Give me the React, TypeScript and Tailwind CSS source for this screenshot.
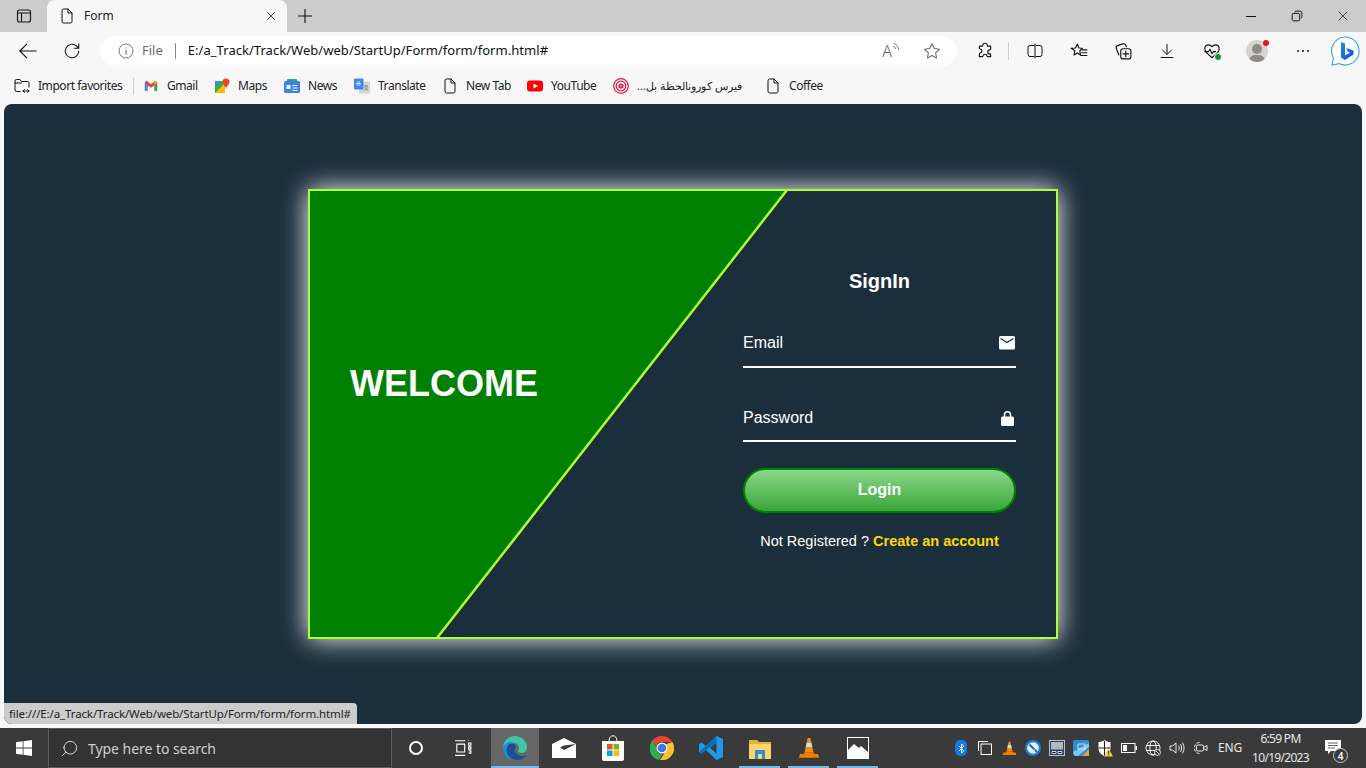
import type { ReactNode } from "react";
import { Bluetooth, Search, X } from "lucide-react";

const ui = "font-['Noto_Sans','Liberation_Sans',sans-serif]";

function Svg({ size = 16, children, className = "" }: { size?: number; children: ReactNode; className?: string }) {
  return (
    <svg width={size} height={size} viewBox="0 0 16 16" fill="none" className={`shrink-0 ${className}`}>
      {children}
    </svg>
  );
}

const line = { stroke: "currentColor", strokeWidth: 1, strokeLinecap: "round" as const, strokeLinejoin: "round" as const };

function PageIcon() {
  return (
    <Svg size={16}>
      <path d="M3 2.500a1.500 1.500 0 0 1 1.500-1.500H9l4 4v8.500a1.500 1.500 0 0 1-1.500 1.500h-7A1.500 1.500 0 0 1 3 13.500z M9 1v4h4" {...line} stroke="#111" />
    </Svg>
  );
}

function Bookmark({ icon, label, className, rtl = false }: { icon: ReactNode; label: string; className: string; rtl?: boolean }) {
  return (
    <div className={`flex items-center shrink-0 ${className}`}>
      {icon}
      {rtl ? (
        <span dir="rtl" className="ml-2 text-[11px] text-[#222] whitespace-nowrap">{label}</span>
      ) : (
        <span className="ml-2 text-[12px] tracking-[-0.45px] text-[#222] whitespace-nowrap">{label}</span>
      )}
    </div>
  );
}

function ToolButton({ children }: { children: ReactNode }) {
  return <div className="relative w-[44px] h-[30px] flex items-center justify-center shrink-0 text-[#111]">{children}</div>;
}

function TaskApp({ children, state = "" }: { children: ReactNode; state?: "" | "active" | "open" }) {
  return (
    <div className={`relative h-[40px] flex items-center justify-center shrink-0 ${state === "active" ? "w-[48px] bg-[#666666]" : "w-[49px]"}`}>
      {children}
      {state !== "" && <div className={`absolute bottom-0 h-[2px] bg-[#76b9ed] ${state === "active" ? "inset-x-0" : "inset-x-[4px]"}`} />}
    </div>
  );
}

function Tray({ children }: { children: ReactNode }) {
  return <div className="w-[24px] h-[40px] flex items-center justify-center shrink-0 text-white">{children}</div>;
}

function VlcIcon({ size = 24 }: { size?: number }) {
  return (
    <svg width={size} height={size} viewBox="0 0 24 24" className="shrink-0">
      <path d="M10.500 1h3l1 5h-5z" fill="#f58a0b" />
      <path d="M9.400 6h5.200l1 5H8.400z" fill="#d9d9d9" />
      <path d="M8.400 11h7.200l1.200 5.500H7.200z" fill="#f58a0b" />
      <path d="M7.200 16.500h9.600l1 2H22l1 4H1l1-4h4.200z" fill="#f07d00" />
    </svg>
  );
}

function BrowserChrome() {
  return (
    <>
      {/* tab strip */}
      <div className="h-[32px] bg-[#cccccc] flex items-stretch shrink-0">
        <div className="w-[47px] flex items-center justify-center">
          <Svg size={16}>
            <rect x="1.500" y="2" width="13" height="12" rx="2" stroke="#111" strokeWidth="1.100" />
            <path d="M2 5h12M5.500 5v8.500" stroke="#111" strokeWidth="1.100" />
          </Svg>
        </div>
        <div className="w-[240px] bg-[#f7f7f7] rounded-t-[8px] flex items-center pl-[12px] pr-[9px]">
          <PageIcon />
          <span className="ml-[9px] text-[12px] text-[#222] flex-1">Form</span>
          <X size={14} strokeWidth={1.4} className="text-[#111]" />
        </div>
        <div className="w-[36px] flex items-center justify-center">
          <Svg size={16}>
            <path d="M8 1v14M1 8h14" stroke="#111" strokeWidth="1.100" />
          </Svg>
        </div>
        <div className="flex-1" />
        <div className="w-[46px] flex items-center justify-center">
          <div className="w-[10px] h-px bg-[#111]" />
        </div>
        <div className="w-[46px] flex items-center justify-center">
          <Svg size={12}>
            <rect x="1.500" y="4.500" width="10" height="10" rx="2" stroke="#111" strokeWidth="1.300" />
            <path d="M5 3.500c0-1 .8-2 2-2h5c1.500 0 2.500 1 2.500 2.500v5c0 1-.7 2-1.500 2" stroke="#111" strokeWidth="1.300" />
          </Svg>
        </div>
        <div className="w-[46px] flex items-center justify-center">
          <X size={16} strokeWidth={1.1} className="text-[#111]" />
        </div>
      </div>

      {/* address row */}
      <div className="h-[38px] bg-[#f7f7f7] flex items-center shrink-0">
        <div className="w-[100px] flex items-center shrink-0">
          <div className="w-[56px] flex justify-center">
            <Svg size={20}>
              <path d="M14.500 8H1.500M7 2.500 1.500 8 7 13.500" {...line} stroke="#111" strokeWidth={0.9} />
            </Svg>
          </div>
          <div className="w-[32px] flex justify-center">
            <Svg size={18}>
              <path d="M14 8a6 6 0 1 1-1.800-4.300L14 5.500M14 1.500v4h-4" {...line} stroke="#111" strokeWidth={0.95} />
            </Svg>
          </div>
        </div>
        <div className="w-[857px] h-[30px] bg-white rounded-full flex items-center pl-[18px] pr-[16px] shrink-0">
          <Svg size={16}>
            <circle cx="8" cy="8" r="7" stroke="#777" strokeWidth="1" />
            <path d="M8 7v4.500M8 4.500v1" stroke="#777" strokeWidth="1.200" />
          </Svg>
          <span className="ml-[8px] text-[13px] text-[#6b6b6b]">File</span>
          <div className="ml-[12px] w-px h-[16px] bg-[#888]" />
          <span className="ml-[12px] text-[13px] tracking-[0.04px] text-[#111] whitespace-nowrap">E:/a_Track/Track/Web/web/StartUp/Form/form/form.html#</span>
          <div className="flex-1" />
          <div className="flex items-center gap-[23px]">
            <div className="flex items-start">
              <span className="text-[16px] leading-[20px] font-light text-[#666]">A</span>
              <Svg size={8} className="mt-[2px]">
                <path d="M2 6c3 .5 4.500 3 4.500 6M3 1c6 1 10 6 10 12" stroke="#666" strokeWidth="1.800" />
              </Svg>
            </div>
            <Svg size={18}>
              <path d="M8 1.500l2 4.300 4.700.6-3.500 3.200.9 4.700L8 12l-4.100 2.300.9-4.700L1.300 6.400 6 5.800z" stroke="#666" strokeWidth="0.900" strokeLinejoin="round" />
            </Svg>
          </div>
        </div>
        <div className="flex items-center ml-[6px]">
          <ToolButton>
            <Svg size={18}>
              <path d="M6 2.800c0-2.300 4-2.300 4 0 0 .5.400.9.900.9h2.100v2.500c0 .4-.4.8-.8.8-2.300 0-2.300 3.600 0 3.600.4 0 .8.400.8.8V13H10.500c-.5 0-.8-.4-.8-.8 0-1.800-3.400-1.800-3.400 0 0 .4-.4.800-.8.800H3v-2.300c0-.5.400-.9.800-.9 1.900 0 1.900-3.600 0-3.600-.4 0-.8-.4-.8-.9V3.700h2.100c.5 0 .9-.4.900-.9z" {...line} stroke="#111" />
            </Svg>
          </ToolButton>
          <div className="w-px h-[18px] bg-[#cfcfcf] ml-[1px] -mr-[2px]" />
          <div className="w-[6px]" />
          <ToolButton>
            <Svg size={16}>
              <path d="M7 2.500H3a2 2 0 0 0-2 2v7a2 2 0 0 0 2 2h4M9 2.500h4a2 2 0 0 1 2 2v7a2 2 0 0 1-2 2H9M8 1v14" {...line} stroke="#111" />
            </Svg>
          </ToolButton>
          <ToolButton>
            <Svg size={18}>
              <path d="M6.500 1.800 8 5.300l3 .3-2.300 2.200.7 3.700-2.900-1.800-2.900 1.800.7-3.700L1 5.600l3.900-.3zM11 7h4M10.500 9.500H15M9.800 12H15" {...line} stroke="#111" />
            </Svg>
          </ToolButton>
          <ToolButton>
            <Svg size={18}>
              <rect x="6" y="6" width="9" height="9" rx="2" {...line} stroke="#111" />
              <path d="M10.500 8v5M8 10.500h5M4.300 11.500 2 5.500C1.700 4.500 2 3.500 3 3.200l5-1.500c1-.3 2 .2 2.400 1.200l.6 1.300" {...line} stroke="#111" />
            </Svg>
          </ToolButton>
          <ToolButton>
            <Svg size={16}>
              <path d="M8 1.500v9.500M3.500 7l4.500 4.500L12.500 7M2 14.500h12" {...line} stroke="#111" />
            </Svg>
          </ToolButton>
          <div className="w-px" />
          <ToolButton>
            <div className="relative">
              <Svg size={18}>
                <path d="M3 9.500C.5 6.500 1.500 2.500 4.800 2.500c1.400 0 2.400.7 3.200 1.700.8-1 1.800-1.700 3.200-1.700 3.300 0 4.300 4 1.800 7L8 14z" {...line} stroke="#111" />
                <path d="M1.500 8.500h3.500l1.300-2 1.700 4 1.200-2h2" {...line} stroke="#111" />
              </Svg>
              <div className="absolute right-[-1px] bottom-[-1px] w-[8px] h-[8px] rounded-full bg-[#1b8a2a] border border-white" />
            </div>
          </ToolButton>
          <div className="w-px" />
          <ToolButton>
            <div className="relative w-[22px] h-[22px] rounded-full bg-[#d6d4d0] overflow-hidden">
              <div className="absolute left-[6px] top-[4px] w-[10px] h-[10px] rounded-full bg-[#8f8b87]" />
              <div className="absolute left-[3px] top-[15px] w-[16px] h-[12px] rounded-full bg-[#8f8b87]" />
            </div>
            <div className="absolute right-[10px] top-[4px] w-[6px] h-[6px] rounded-full bg-[#e81123]" />
          </ToolButton>
          <div className="w-[2px]" />
          <ToolButton>
            <div className="flex gap-[3px]">
              <div className="w-[2px] h-[2px] rounded-full bg-[#111]" />
              <div className="w-[2px] h-[2px] rounded-full bg-[#111]" />
              <div className="w-[2px] h-[2px] rounded-full bg-[#111]" />
            </div>
          </ToolButton>
          <div className="w-[34px] flex justify-center ml-[3px]">
            <svg width="32" height="32" viewBox="0 0 32 32">
              <defs>
                <linearGradient id="bingB" x1="0" y1="0" x2="1" y2="1">
                  <stop offset="0" stopColor="#1a8fe8" />
                  <stop offset="1" stopColor="#1748d8" />
                </linearGradient>
              </defs>
              <path d="M16 2a14 14 0 1 1-6 26.600L3 30l1.500-7A14 14 0 0 1 16 2z" fill="#fff" stroke="#3aa5ee" strokeWidth="1.100" />
              <path d="M12 7l4 1.500v12l5-2.800-2.300-1.100-1.500-3.600 7.300 2.500v4L16 25l-4-2.500z" fill="url(#bingB)" />
            </svg>
          </div>
        </div>
      </div>

      {/* favorites row */}
      <div className="h-[34px] bg-[#f7f7f7] flex items-center shrink-0 pl-[14px] pb-[2px]">
        <Bookmark
          className="w-[119px]"
          label="Import favorites"
          icon={
            <Svg size={16}>
              <path d="M6 13.500H2.500A1.500 1.500 0 0 1 1 12V3a1.500 1.500 0 0 1 1.500-1.500H6l1.500 2h6A1.500 1.500 0 0 1 15 5v4M1 5h6.500M9 13h6M10.500 11.500 9 13l1.500 1.500M13.500 11.500 15 13l-1.500 1.500" {...line} stroke="#111" />
            </Svg>
          }
        />
        <div className="w-px h-[17px] bg-[#cfcfcf] shrink-0" />
        <div className="w-[10px] shrink-0" />
        <Bookmark
          className="w-[71px]"
          label="Gmail"
          icon={
            <Svg size={14} className="mr-[1px]">
              <path d="M1 3.500v10h3V7l4 3 4-3v6.500h3v-10L13 2 8 6 3 2z" fill="#ea4335" />
              <path d="M1 3.500v10h3V7z" fill="#4285f4" />
              <path d="M12 7v6.500h3v-10z" fill="#34a853" />
              <path d="M15 3.500 13 2l-1 .8V7z" fill="#fbbc04" />
            </Svg>
          }
        />
        <Bookmark
          className="w-[69px]"
          label="Maps"
          icon={
            <Svg size={16} className="-ml-[1px]">
              <path d="M1 3h10v12H1z" fill="#34a853" />
              <path d="M1 15 11 5v10z" fill="#fbbc04" />
              <path d="M1 3h5L1 8z" fill="#4285f4" />
              <path d="M12 0.500a3.500 3.500 0 0 1 3.500 3.500c0 2.200-2.500 4-3.500 6-1-2-3.500-3.800-3.500-6A3.500 3.500 0 0 1 12 .5z" fill="#ea4335" />
            </Svg>
          }
        />
        <Bookmark
          className="w-[70px]"
          label="News"
          icon={
            <Svg size={16}>
              <path d="M2.500 3 3.500 1h9l1 2z" fill="#34a853" />
              <rect x="0" y="3" width="16" height="12" rx="1.500" fill="#3b82f0" />
              <path d="M2.500 7h4v4h-4zM8.500 7h5v1h-5zM8.500 9.500h5v1h-5zM8.500 12h5v1h-5z" fill="#fff" />
            </Svg>
          }
        />
        <Bookmark
          className="w-[88px]"
          label="Translate"
          icon={
            <Svg size={16}>
              <rect x="5" y="3.500" width="11" height="12" rx="1" fill="#d4d4d4" />
              <rect x="0" y="0.500" width="9.500" height="11" rx="1" fill="#4285f4" />
              <path d="M3 5.500h3.500c0 2-3.500 3-3.500.5s2-2.500 3-1.500" stroke="#fff" strokeWidth="0.800" />
              <path d="M10 8h4M12 7v1M11 8.500c.5 2 1.500 3 3 3.500M13.500 8.500c-.5 2-1.500 3-3 3.500" stroke="#6b7280" strokeWidth="0.700" />
            </Svg>
          }
        />
        <Bookmark className="w-[85px]" label="New Tab" icon={<PageIcon />} />
        <Bookmark
          className="w-[86px]"
          label="YouTube"
          icon={
            <Svg size={16}>
              <rect x="0" y="2.500" width="16" height="11" rx="3" fill="#ff0000" />
              <path d="M6.500 5.500v5L11 8z" fill="#fff" />
            </Svg>
          }
        />
        <Bookmark
          className="w-[152px]"
          rtl
          label="فيرس كورونالحظة بل..."
          icon={
            <Svg size={16}>
              <circle cx="8" cy="8" r="7.300" stroke="#e3173e" strokeWidth="1.200" />
              <circle cx="8" cy="8" r="4.800" stroke="#e3173e" strokeWidth="1.200" />
              <circle cx="8" cy="8" r="2.600" fill="#e3173e" />
              <circle cx="8" cy="8" r="1.300" fill="#9b9b9b" />
            </Svg>
          }
        />
        <Bookmark className="" label="Coffee" icon={<PageIcon />} />
      </div>
    </>
  );
}

function LoginCard() {
  return (
    <div className="relative w-[750px] h-[450px] border-2 border-[#adff2f] shadow-[0_0_25px_#ffffff] flex font-['Liberation_Sans',Arial,sans-serif] text-white">
      {/* diagonal panel */}
      <svg className="absolute inset-0" width="746" height="446" viewBox="0 0 746 446">
        <polygon points="0,0 477,0 127,448 0,448" fill="#008000" />
        <line x1="477" y1="-1" x2="127" y2="447" stroke="#adff2f" strokeWidth="2.500" />
      </svg>

      <div className="relative flex-1 flex items-center pl-10 pb-[60px]">
        <h1 className="text-[36px] font-bold leading-none">WELCOME</h1>
      </div>

      <div className="relative w-[273px] mr-10 flex flex-col pt-[77px]">
        <h2 className="text-[20px] leading-[26px] font-bold text-center">SignIn</h2>
        <div className="mt-[34px] h-[40px] border-b-2 border-white flex items-start justify-between pt-[3px]">
          <span className="text-[16px] leading-[24px]">Email</span>
          <svg width="16" height="14" viewBox="0 0 16 14" className="mt-[5px] mr-px">
            <rect width="16" height="13.500" rx="1.500" fill="#ffffff" />
            <path d="M1.500 2.500 8 6.500l6.500-4" fill="none" stroke="#1b2e3c" strokeWidth="1.200" />
          </svg>
        </div>
        <div className="mt-[32px] h-[42px] border-b-2 border-white flex items-start justify-between pt-[6px]">
          <span className="text-[16px] leading-[24px]">Password</span>
          <svg width="13" height="15" viewBox="0 0 13 15" className="mt-[5px] mr-[2px]">
            <path d="M3.500 6V3.800a3 3 0 0 1 6 0V6" fill="none" stroke="#ffffff" strokeWidth="1.500" />
            <rect y="5.500" width="13" height="9.500" rx="1.500" fill="#ffffff" />
          </svg>
        </div>
        <button className="mt-[26px] h-[45px] pb-[2px] rounded-full border-[2.500px] border-[#008000] bg-gradient-to-b from-[#8ad88a] to-[#37a537] text-[16px] font-bold text-white">
          Login
        </button>
        <p className="mt-[18px] text-center text-[14.500px] leading-[20px] whitespace-nowrap">
          Not Registered ? <a href="#" className="font-bold text-[#ffd700]">Create an account</a>
        </p>
      </div>
    </div>
  );
}

function Taskbar() {
  return (
    <div className="h-[40px] bg-[#3a3a3a] flex items-center shrink-0 text-white">
      <div className="w-[48px] flex justify-center">
        <Svg size={16}>
          <path d="M0 2.300 6.700 1.300v6.300H0zM7.500 1.200 16 0v7.600H7.500zM0 8.400h6.700v6.300L0 13.700zM7.500 8.400H16V16l-8.500-1.200z" fill="#fff" />
        </Svg>
      </div>
      <div className="w-[344px] h-[40px] bg-[#333333] border border-[#5c5c5c] flex items-center pl-[11px] text-[#d0d0d0]">
        <Search size={19} strokeWidth={1} className="-scale-x-100 text-white" />
        <span className="ml-[9px] text-[14px] tracking-[-0.05px]">Type here to search</span>
      </div>
      <div className="w-[48px] flex justify-center">
        <div className="w-[14px] h-[14px] rounded-full border-2 border-white" />
      </div>
      <div className="w-[51px] flex justify-center pr-[6px]">
        <Svg size={18}>
          <path d="M1 1.500h9M1 14.500h9M2.500 4.500h7v7h-7zM13 3.500h2v2h-2zM13 7h2v2h-2zM13 1v.5M13 10.500h2v2h-2" stroke="#fff" strokeWidth="1" />
        </Svg>
      </div>
      <TaskApp state="active">
        <svg width="26" height="26" viewBox="0 0 26 26">
          <path d="M13 1a12 12 0 0 1 12 12c0 3-2.500 5-5.500 5-2.300 0-3.500-1-3.500-2 0-1 1-1.500 1-3 0-3-2.500-5-5.500-5C7 8 3 10 1.200 12 1.800 6 6.500 1 13 1z" fill="#3fc7a4" />
          <path d="M1 13c0-3 3.500-6 7.500-6 4 0 6 2.500 6 5 0-3-2-3.500-4-3.500C7 8.500 4.500 11.500 4.500 15c0 4 3.500 9 8.500 10C6.500 25 1 20 1 13z" fill="#1b8fdc" />
          <path d="M10.500 8.500c-3.500 0-6 3-6 6.500 0 5 4.500 10 11 10 4 0 7-2 9-5-2 1-4 1.500-6 1-4-1-6-3-6-6 0-1.500.7-2.500 1.500-3-.5-2-2-3.500-3.500-3.500z" fill="#15508f" />
        </svg>
      </TaskApp>
      <TaskApp>
        <svg width="24" height="20" viewBox="0 0 24 20">
          <path d="M0 6 12 0l12 6-12 1.500-4 2L12 12l12-6v14H0z" fill="#fff" />
        </svg>
      </TaskApp>
      <TaskApp>
        <svg width="24" height="26" viewBox="0 0 24 26">
          <path d="M8 6c0-7 8-7 8 0" fill="none" stroke="#fff" strokeWidth="1" />
          <path d="M1 6h22v18a2 2 0 0 1-2 2H3a2 2 0 0 1-2-2z" fill="#fff" />
          <rect x="6" y="9" width="5.500" height="5.500" fill="#f25022" />
          <rect x="12.500" y="9" width="5.500" height="5.500" fill="#7fba00" />
          <rect x="6" y="15.500" width="5.500" height="5.500" fill="#00a4ef" />
          <rect x="12.500" y="15.500" width="5.500" height="5.500" fill="#ffb900" />
        </svg>
      </TaskApp>
      <TaskApp>
        <svg width="24" height="24" viewBox="0 0 24 24">
          <path d="M12 0a12 12 0 0 1 10.400 6H12a6 6 0 0 0-5.700 4.200L2.500 4.300A12 12 0 0 1 12 0z" fill="#ea4335" />
          <path d="M2.500 4.300 7 12a5 5 0 0 0 5.800 5.900L9 24A12 12 0 0 1 2.500 4.300z" fill="#34a853" />
          <path d="M22.400 6A12 12 0 0 1 10 24l5.500-8.500A6 6 0 0 0 16 8z" fill="#fbc02d" />
          <circle cx="12" cy="12" r="5.500" fill="#fff" />
          <circle cx="12" cy="12" r="4.300" fill="#3b78e7" />
        </svg>
      </TaskApp>
      <TaskApp>
        <svg width="24" height="24" viewBox="0 0 24 24">
          <path d="M17.500 0 24 3v18l-6.500 3L7 14l-4.500 3.500L0 16V8l2.500-1.500L7 10zM17.500 6.500 11 12l6.500 5.500z" fill="#1f9ae8" />
          <path d="M17.500 0v6.500L7 14 2.500 17.500 0 16l17.500-16z" fill="#0b6fb8" />
        </svg>
      </TaskApp>
      <TaskApp state="open">
        <svg width="24" height="22" viewBox="0 0 24 22">
          <path d="M1 3h8l2 2h12v4H1z" fill="#e3b23c" />
          <path d="M1 7h22v15H1z" fill="#fbd56b" />
          <path d="M7 13h10v9h-3v-5h-4v5H7z" fill="#2d8fd5" />
        </svg>
      </TaskApp>
      <TaskApp state="open">
        <VlcIcon size={22} />
      </TaskApp>
      <TaskApp state="open">
        <svg width="22" height="22" viewBox="0 0 22 22">
          <rect x="0.500" y="0.500" width="21" height="21" fill="none" stroke="#fff" />
          <path d="M0 21v-7l7-7 5 4 2-2 8 7v5z" fill="#fff" />
        </svg>
      </TaskApp>
      <div className="flex-1" />

      <Tray>
        <div className="w-[12px] h-[16px] rounded-[5px] bg-[#1479e6] flex items-center justify-center">
          <Bluetooth size={11} strokeWidth={2} />
        </div>
      </Tray>
      <Tray>
        <Svg size={16}>
          <rect x="4" y="4" width="10.500" height="10.500" stroke="#fff" />
          <path d="M1.500 11V1.500H11" stroke="#fff" />
        </Svg>
      </Tray>
      <Tray><VlcIcon size={15} /></Tray>
      <Tray>
        <svg width="16" height="16" viewBox="0 0 16 16">
          <circle cx="8" cy="8" r="8" fill="#1d7fd1" />
          <circle cx="8" cy="8" r="5.800" fill="#e8f2fa" />
          <path d="M4.500 4.500l5 5M10 10l2 2" stroke="#1d6db0" strokeWidth="2" />
        </svg>
      </Tray>
      <Tray>
        <svg width="16" height="16" viewBox="0 0 16 16">
          <rect x="0.500" y="0.500" width="15" height="15" fill="#2a3f66" stroke="#b8c2cf" />
          <rect x="2" y="2" width="12" height="7.500" fill="#b7b7b7" />
          <path d="M3 11.500h4v2H3zM9 11.500h4v2H9z" stroke="#fff" strokeWidth="0.800" />
        </svg>
      </Tray>
      <Tray>
        <svg width="16" height="16" viewBox="0 0 16 16">
          <rect width="16" height="16" rx="2" fill="#2f8fd0" />
          <path d="M0 12 16 3v4L5 16H2z" fill="#7fc6e8" />
          <path d="M9 16 16 9v7z" fill="#d9a441" />
          <path d="M5 4h7v5H5z" stroke="#e6f3fb" strokeWidth="0.800" fill="none" />
        </svg>
      </Tray>
      <Tray>
        <svg width="16" height="17" viewBox="0 0 16 17">
          <path d="M7.500 0c2 1.500 4 2 6 2v6c0 4-2.500 6.500-6 8-3.500-1.500-6-4-6-8V2c2 0 4-.5 6-2z" fill="#fff" />
          <path d="M7.500 1v15M1.500 8h12" stroke="#222" strokeWidth="1" />
          <path d="M11.500 8.500 16 16.500H7z" fill="#ffc83d" />
          <path d="M11.500 11v3M11.500 14.700v1" stroke="#222" strokeWidth="0.900" />
        </svg>
      </Tray>
      <Tray>
        <svg width="16" height="10" viewBox="0 0 16 10">
          <rect x="0.500" y="0.500" width="13.500" height="9" stroke="#fff" fill="none" />
          <rect x="2" y="2" width="4" height="6" fill="#fff" />
          <rect x="14.500" y="3" width="1.500" height="4" fill="#fff" />
        </svg>
      </Tray>
      <Tray>
        <Svg size={16}>
          <circle cx="8" cy="8" r="7" stroke="#fff" strokeWidth="0.900" />
          <ellipse cx="8" cy="8" rx="3.200" ry="7" stroke="#fff" strokeWidth="0.900" />
          <path d="M1.500 5.500h13M1.500 10.500h13" stroke="#fff" strokeWidth="0.900" />
          <circle cx="12.500" cy="12.500" r="3" fill="#3a3a3a" stroke="#fff" strokeWidth="0.800" />
          <path d="M11 11l3 3" stroke="#fff" strokeWidth="0.800" />
        </Svg>
      </Tray>
      <Tray>
        <Svg size={16}>
          <path d="M1 6h2.500L7 3v10l-3.500-3H1zM9.500 5.500c1 1.500 1 3.500 0 5M11.500 4c1.500 2.500 1.500 5.500 0 8M13.500 2.500c2 3.500 2 7.500 0 11" stroke="#fff" strokeWidth="0.900" />
        </Svg>
      </Tray>
      <Tray>
        <Svg size={16}>
          <path d="M6.500 2.500C3 2.500 1.500 5 1.500 8s1.500 5.500 5 5.500" stroke="#fff" strokeWidth="0.900" strokeDasharray="3 1.500" />
          <rect x="3.500" y="5" width="7" height="6" rx="1.500" stroke="#fff" strokeWidth="0.900" />
          <path d="M10.500 7.500 14 5.500v5l-3.500-2" stroke="#fff" strokeWidth="0.900" />
        </Svg>
      </Tray>
      <div className="w-[34px] text-center text-[12px] tracking-[-0.2px] text-[#e8e8e8]">ENG</div>
      <div className="w-[67px] text-center text-[12px] leading-[19px] tracking-[-0.7px] text-[#e8e8e8]">
        <div>6:59 PM</div>
        <div>10/19/2023</div>
      </div>
      <div className="relative w-[52px] h-[40px] flex items-center pl-[11px]">
        <Svg size={16} className="mb-[3px]">
          <path d="M0 1h16v11H6l-3 3v-3H0z" fill="#fff" />
          <path d="M3 4h10M3 6.500h10M3 9h7" stroke="#3a3a3a" strokeWidth="0.800" />
        </Svg>
        <div className="absolute right-[18px] bottom-[5px] w-[15px] h-[15px] rounded-full bg-[#3a3a3a] border border-[#c8c8c8] flex items-center justify-center text-[10px] font-semibold leading-none">
          4
        </div>
      </div>
    </div>
  );
}

export default function App() {
  return (
    <div className={`w-[1366px] h-[768px] overflow-hidden flex flex-col bg-[#f7f7f7] ${ui}`}>
      <BrowserChrome />
      <main className="relative h-[620px] mx-[4px] rounded-[8px] bg-[#1b2e3c] flex items-center justify-center shrink-0">
        <LoginCard />
        <div className="absolute left-0 bottom-0 h-[21px] w-[353px] bg-[#cccccc] rounded-tr-[4px] rounded-bl-[8px] pl-[5px] flex items-center text-[11.500px] tracking-[-0.12px] text-[#222] whitespace-nowrap">
          file:///E:/a_Track/Track/Web/web/StartUp/Form/form/form.html#
        </div>
      </main>
      <div className="h-[4px] shrink-0" />
      <Taskbar />
    </div>
  );
}
